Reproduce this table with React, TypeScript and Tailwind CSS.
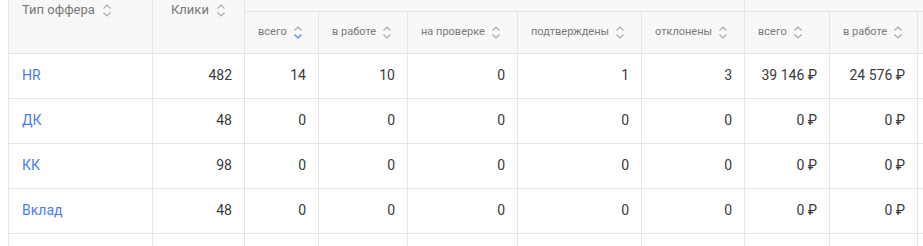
import React from "react";

const SortIcon = ({ active }: { active?: "up" | "down" }) => (
  <svg width="10" height="15" viewBox="0 0 10 15" className="inline-block shrink-0" fill="none">
    <path d="M1.5 5.5 L5 2 L8.5 5.5" stroke={active === "up" ? "#4a7cf0" : "#a8a8a8"} strokeWidth="1.1" />
    <path d="M1.5 9.5 L5 13 L8.5 9.5" stroke={active === "down" ? "#4a7cf0" : "#a8a8a8"} strokeWidth="1.1" />
  </svg>
);

const widths = [144, 92, 74, 89, 110, 124, 103, 85, 88, 120];

const sub = ["всего", "в работе", "на проверке", "подтверждены", "отклонены", "всего", "в работе"];

const R = "\u00a0₽";
const rows: { name: string; cells: string[] }[] = [
  { name: "HR", cells: ["482", "14", "10", "0", "1", "3", "39\u00a0146" + R, "24\u00a0576" + R] },
  { name: "ДК", cells: ["48", "0", "0", "0", "0", "0", "0" + R, "0" + R] },
  { name: "КК", cells: ["98", "0", "0", "0", "0", "0", "0" + R, "0" + R] },
  { name: "Вклад", cells: ["48", "0", "0", "0", "0", "0", "0" + R, "0" + R] },
];

export default function App() {
  return (
    <div
      className="w-[923px] h-[246px] overflow-hidden bg-white pl-[8px]"
      style={{ fontFamily: "Roboto, 'Liberation Sans', sans-serif" }}
    >
      <table className="border-collapse table-fixed w-[1029px]">
        <colgroup>
          {widths.map((w, i) => (
            <col key={i} style={{ width: w }} />
          ))}
        </colgroup>
        <thead className="bg-[#f8f8f8]">
          <tr className="h-[11px]">
            <th
              rowSpan={2}
              className="border border-[#e5e5e5] border-t-0 align-top text-left font-normal pl-[13px] pt-[2px]"
            >
              <div className="flex items-center gap-[7px] text-[13px] leading-[16px] text-[#777]">
                <span>Тип оффера</span>
                <SortIcon />
              </div>
            </th>
            <th
              rowSpan={2}
              className="border border-[#e5e5e5] border-t-0 align-top text-left font-normal pl-[18px] pt-[2px]"
            >
              <div className="flex items-center gap-[7px] text-[13px] leading-[16px] text-[#777]">
                <span>Клики</span>
                <SortIcon />
              </div>
            </th>
            <th colSpan={5} className="border border-[#e5e5e5] border-t-0 p-0" />
            <th colSpan={3} className="border border-[#e5e5e5] border-t-0 p-0" />
          </tr>
          <tr className="h-[42px]">
            {sub.map((s, i) => (
              <th key={i} className="border border-[#e5e5e5] text-left font-normal pl-[13px] pr-[4px] py-0">
                <div className="flex items-center gap-[6px] text-[11px] leading-[14px] text-[#7a7a7a] whitespace-nowrap">
                  <span>{s}</span>
                  <SortIcon active={i === 0 ? "down" : undefined} />
                </div>
              </th>
            ))}
            <th className="border border-[#e5e5e5]" />
          </tr>
        </thead>
        <tbody className="bg-white">
          {rows.map((r) => (
            <tr key={r.name} className="h-[45px]">
              <td className="border border-[#e5e5e5] pl-[13px] text-[14px] text-[#4a7cf0]">{r.name}</td>
              {r.cells.map((c, i) => (
                <td
                  key={i}
                  className="border border-[#e5e5e5] pr-[12px] text-right text-[14px] text-[#3a3a3a] whitespace-nowrap"
                >
                  {c}
                </td>
              ))}
              <td className="border border-[#e5e5e5]" />
            </tr>
          ))}
          <tr className="h-[45px]">
            {widths.map((_, i) => (
              <td key={i} className="border border-[#e5e5e5]" />
            ))}
          </tr>
        </tbody>
      </table>
    </div>
  );
}
